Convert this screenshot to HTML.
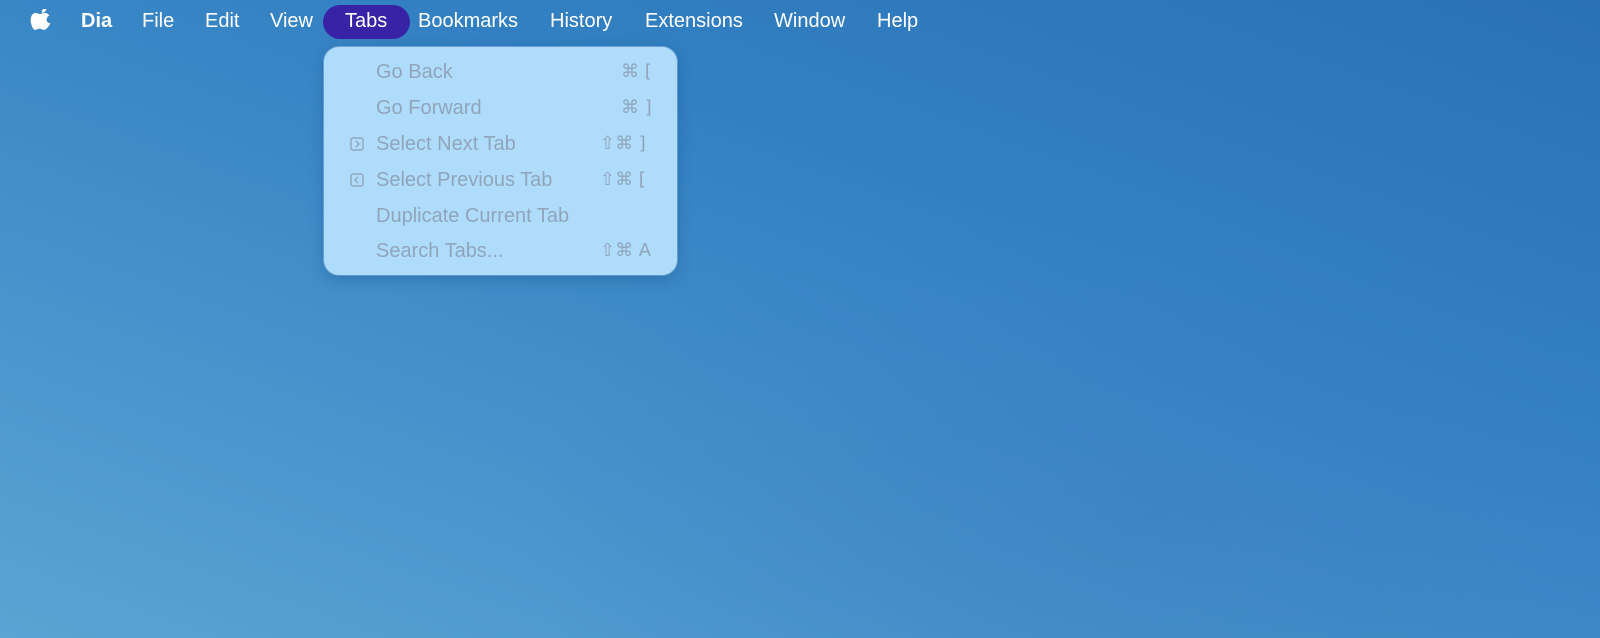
<!DOCTYPE html>
<html><head><meta charset="utf-8"><style>
*{margin:0;padding:0;box-sizing:border-box}
html,body{width:1600px;height:638px;overflow:hidden}
body{position:relative;font-family:"Liberation Sans","DejaVu Sans",sans-serif;
background:
radial-gradient(ellipse 900px 450px at 1150px 520px, rgba(60,120,190,0.35), rgba(60,120,190,0) 70%),
linear-gradient(200deg,#2a71b5 0%,#3280c2 35%,#4490cb 65%,#5aa3d3 100%);}
.mb{position:absolute;top:9px;color:#fff;font-size:20px;line-height:24px;white-space:nowrap}
.hl{position:absolute;left:323px;top:5px;width:87px;height:34px;border-radius:17px;background:#3823a6}
.menu{position:absolute;left:324px;top:47px;width:353px;height:228px;border-radius:15px;background:#b0dcfb;
box-shadow:0 4px 14px rgba(0,40,90,0.25),0 0 0 1px rgba(150,200,240,0.6)}
.it{position:absolute;left:52px;color:#8ea6bc;font-size:20px;line-height:22px;white-space:nowrap}
.sc{position:absolute;color:#8ea6bc;font-size:18px;line-height:22px;white-space:nowrap;font-family:"DejaVu Sans","Liberation Sans",sans-serif}
.ic{position:absolute;left:26px;width:14px;height:14px}
</style></head><body>
<svg style="position:absolute;left:30px;top:9px" width="21" height="24" viewBox="0 0 170 200"><path fill="#fff" d="M150 150c-6 14-10 20-18 31-11 16-27 35-46 35-17 0-21-11-44-11-22 0-27 11-44 11C-21 216-36 170-40 150c-12-54 10-99 45-100 17 0 28 12 44 12 15 0 25-12 45-12 16 0 33 9 45 24-39 21-33 78 11 76zM103 30c8-10 14-24 12-38-13 1-28 9-37 19-8 9-15 24-12 37 14 1 28-7 37-18z" transform="translate(40,-10) scale(0.85)"/></svg>
<div class="hl"></div>
<div class="mb" style="left:81px;font-weight:bold">Dia</div>
<div class="mb" style="left:142px">File</div>
<div class="mb" style="left:205px">Edit</div>
<div class="mb" style="left:270px">View</div>
<div class="mb" style="left:345px">Tabs</div>
<div class="mb" style="left:418px">Bookmarks</div>
<div class="mb" style="left:550px">History</div>
<div class="mb" style="left:645px">Extensions</div>
<div class="mb" style="left:774px">Window</div>
<div class="mb" style="left:877px">Help</div>
<div class="menu">
<div class="it" style="top:14px">Go Back</div><div class="sc" style="left:297px;top:14px">⌘ [</div>
<div class="it" style="top:50px">Go Forward</div><div class="sc" style="left:297px;top:50px">⌘ ]</div>
<svg class="ic" style="top:90px" viewBox="0 0 14 14"><rect x="1" y="1" width="12" height="12" rx="2" fill="none" stroke="#8ea6bc" stroke-width="1.4"/><path d="M6 4l3 3-3 3" fill="none" stroke="#8ea6bc" stroke-width="1.4"/></svg>
<div class="it" style="top:86px">Select Next Tab</div><div class="sc" style="left:276px;top:86px">⇧⌘ ]</div>
<svg class="ic" style="top:126px" viewBox="0 0 14 14"><rect x="1" y="1" width="12" height="12" rx="2" fill="none" stroke="#8ea6bc" stroke-width="1.4"/><path d="M8 4L5 7l3 3" fill="none" stroke="#8ea6bc" stroke-width="1.4"/></svg>
<div class="it" style="top:122px">Select Previous Tab</div><div class="sc" style="left:276px;top:122px">⇧⌘ [</div>
<div class="it" style="top:158px">Duplicate Current Tab</div>
<div class="it" style="top:193px">Search Tabs...</div><div class="sc" style="left:276px;top:193px">⇧⌘ A</div>
</div>
</body></html>
